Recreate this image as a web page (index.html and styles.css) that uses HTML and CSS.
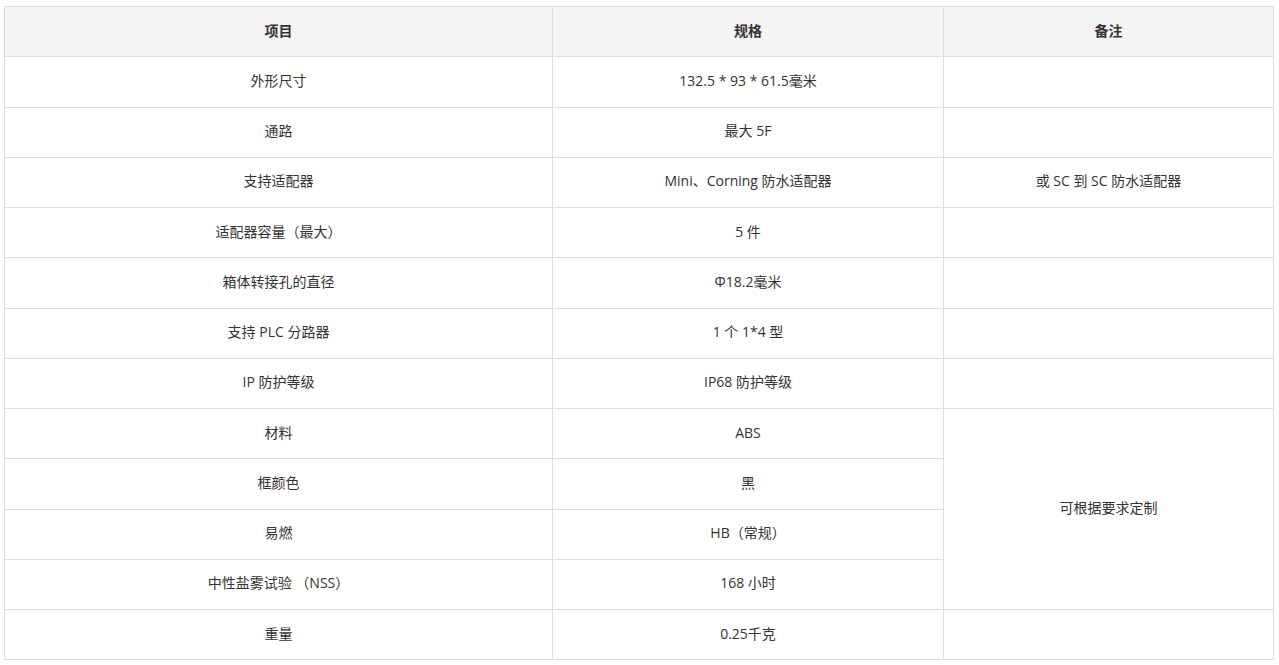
FILE: index.html
```html
<!DOCTYPE html>
<html lang="zh">
<head>
<meta charset="utf-8">
<link rel="stylesheet" href="styles.css">
</head>
<body>
<div class="wrap">
<table class="spec">
<colgroup><col class="c1"><col class="c2"><col class="c3"></colgroup>
<thead>
<tr><th>项目</th><th>规格</th><th>备注</th></tr>
</thead>
<tbody>
<tr><td>外形尺寸</td><td>132.5 * 93 * 61.5毫米</td><td></td></tr>
<tr><td>通路</td><td>最大 5F</td><td></td></tr>
<tr><td>支持适配器</td><td>Mini、Corning 防水适配器</td><td>或 SC 到 SC 防水适配器</td></tr>
<tr><td>适配器容量（最大）</td><td>5 件</td><td></td></tr>
<tr><td>箱体转接孔的直径</td><td>Φ18.2毫米</td><td></td></tr>
<tr><td>支持 PLC 分路器</td><td>1 个 1*4 型</td><td></td></tr>
<tr><td>IP 防护等级</td><td>IP68 防护等级</td><td></td></tr>
<tr><td>材料</td><td>ABS</td><td rowspan="4">可根据要求定制</td></tr>
<tr><td>框颜色</td><td>黑</td></tr>
<tr><td>易燃</td><td>HB（常规）</td></tr>
<tr><td>中性盐雾试验 （NSS）</td><td>168 小时</td></tr>
<tr><td>重量</td><td>0.25千克</td><td></td></tr>
</tbody>
</table>
</div>
</body>
</html>
```
FILE: styles.css
```css
html, body {
  margin: 0;
  padding: 0;
  background: #ffffff;
}
.wrap {
  padding: 6px 7px 0 4px;
}
.spec {
  width: 1269px;
  border-collapse: collapse;
  table-layout: fixed;
  font-family: "Open Sans", "Noto Sans CJK SC", sans-serif;
  font-size: 14px;
  line-height: 20px;
  color: #333333;
}
.c1 { width: 548px; }
.c2 { width: 391px; }
.c3 { width: 330px; }
.spec tr {
  height: 50.25px;
}
.spec th,
.spec td {
  border: 1px solid #dddddd;
  text-align: center;
  vertical-align: middle;
  padding: 0 8px 2px;
}
.spec th {
  background: #f4f4f4;
  font-weight: 700;
}
```
